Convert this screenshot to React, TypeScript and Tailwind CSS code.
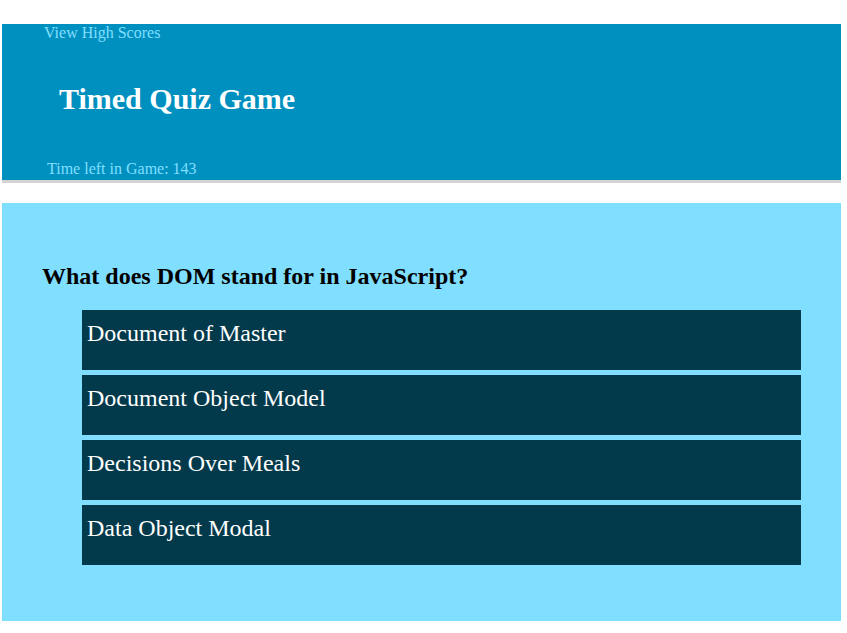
import React from "react";

const answers = [
  "Document of Master",
  "Document Object Model",
  "Decisions Over Meals",
  "Data Object Modal",
];

export default function App() {
  return (
    <div
      className="min-h-[633px] bg-white pt-[24px] pl-[2px] pr-[6px]"
      style={{ fontFamily: '"Liberation Serif", "Times New Roman", serif' }}
    >
      <header className="bg-[#0090c0] border-b-[3px] border-[#d3d3d3] pb-[2px]">
        <a className="block pl-[42px] text-[16px] leading-[18px] text-[#80dfff] cursor-pointer">
          View High Scores
        </a>
        <h1 className="mt-[40px] pl-[57px] text-[30px] leading-[34px] font-bold text-white">
          Timed Quiz Game
        </h1>
        <p className="mt-[44px] pl-[45px] text-[16px] leading-[18px] text-[#80dfff]">
          Time left in Game: 143
        </p>
      </header>
      <main className="mt-[20px] bg-[#80deff] pt-[59px] pb-[56px] pl-[40px] pr-[40px]">
        <h2 className="text-[24px] leading-[28px] font-bold text-black">
          What does DOM stand for in JavaScript?
        </h2>
        <div className="mt-[20px] ml-[40px] flex flex-col gap-[5px]">
          {answers.map((a) => (
            <button
              key={a}
              className="h-[60px] bg-[#033a4b] text-left text-white text-[24px] leading-[28px] pl-[5px] pt-[9px] flex items-start"
              style={{ fontFamily: '"Liberation Serif", "Times New Roman", serif' }}
            >
              {a}
            </button>
          ))}
        </div>
      </main>
    </div>
  );
}
